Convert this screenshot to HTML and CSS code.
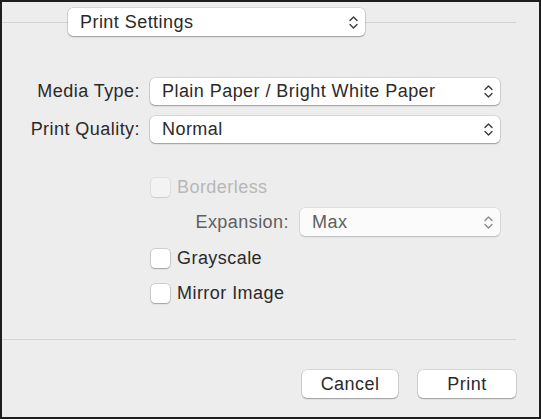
FILE: index.html
```html
<!DOCTYPE html>
<html>
<head>
<meta charset="utf-8">
<link rel="stylesheet" href="styles.css">
</head>
<body>
<div class="dialog">
  <div class="header">
    <div class="popup popup-main">
      <span>Print Settings</span>
      <svg class="chev" width="9" height="15" viewBox="0 0 9 15"><path d="M1 5.5 L4.5 2 L8 5.5 M1 9.5 L4.5 13 L8 9.5" fill="none" stroke="#3a3a3a" stroke-width="1.4" stroke-linecap="round" stroke-linejoin="round"/></svg>
    </div>
  </div>

  <div class="form">
    <div class="label">Media Type:</div>
    <div class="popup popup-field">
      <span>Plain Paper / Bright White Paper</span>
      <svg class="chev" width="9" height="15" viewBox="0 0 9 15"><path d="M1 5.5 L4.5 2 L8 5.5 M1 9.5 L4.5 13 L8 9.5" fill="none" stroke="#3a3a3a" stroke-width="1.4" stroke-linecap="round" stroke-linejoin="round"/></svg>
    </div>
    <div class="label">Print Quality:</div>
    <div class="popup popup-field">
      <span>Normal</span>
      <svg class="chev" width="9" height="15" viewBox="0 0 9 15"><path d="M1 5.5 L4.5 2 L8 5.5 M1 9.5 L4.5 13 L8 9.5" fill="none" stroke="#3a3a3a" stroke-width="1.4" stroke-linecap="round" stroke-linejoin="round"/></svg>
    </div>
  </div>

  <div class="options">
    <div class="check-row disabled row-borderless">
      <span class="box"></span><span>Borderless</span>
    </div>
    <div class="expansion-row">
      <div class="label sub-label">Expansion:</div>
      <div class="popup popup-sub">
        <span>Max</span>
        <svg class="chev" width="9" height="15" viewBox="0 0 9 15"><path d="M1 5.5 L4.5 2 L8 5.5 M1 9.5 L4.5 13 L8 9.5" fill="none" stroke="#8a8a8a" stroke-width="1.4" stroke-linecap="round" stroke-linejoin="round"/></svg>
      </div>
    </div>
    <div class="check-row row-gray">
      <span class="box"></span><span>Grayscale</span>
    </div>
    <div class="check-row row-mirror">
      <span class="box"></span><span>Mirror Image</span>
    </div>
  </div>

  <div class="separator"></div>

  <div class="buttons">
    <div class="btn btn-cancel">Cancel</div>
    <div class="btn btn-print">Print</div>
  </div>
</div>
</body>
</html>
```

FILE: styles.css
```css
html, body {
  margin: 0;
  padding: 0;
}

.dialog {
  width: 541px;
  height: 419px;
  box-sizing: border-box;
  border: 2px solid #1e1e1e;
  background: #ededed;
  font-family: "Liberation Sans", Arial, sans-serif;
  font-size: 18px;
  letter-spacing: 0.45px;
  color: #2a2a2a;
  overflow: hidden;
}

.header {
  height: 34px;
  padding: 6px 0 0 66px;
  box-sizing: border-box;
  background: linear-gradient(#d4d4d4, #d4d4d4) no-repeat 0 20px / 514px 1px;
}

.popup {
  display: flex;
  align-items: center;
  justify-content: space-between;
  box-sizing: border-box;
  background: #ffffff;
  border-radius: 5px;
  box-shadow: 0 0 0 0.5px rgba(0, 0, 0, 0.18), 0 1px 1.5px rgba(0, 0, 0, 0.28);
  padding: 0 7px 0 12px;
  white-space: nowrap;
}

.chev {
  flex: none;
}

.popup-main {
  width: 297px;
  height: 28px;
}

.form {
  margin-top: 42px;
  display: grid;
  grid-template-columns: 138px 350px;
  column-gap: 10px;
  row-gap: 11px;
  align-items: center;
}

.label {
  text-align: right;
  white-space: nowrap;
}

.popup-field {
  height: 27px;
}

.options {
  margin-left: 149px;
  width: 349px;
}

.check-row {
  display: flex;
  align-items: center;
  gap: 7px;
  height: 19px;
}

.box {
  width: 19px;
  height: 19px;
  box-sizing: border-box;
  border-radius: 4px;
  background: #ffffff;
  box-shadow: 0 0 0 0.5px rgba(0, 0, 0, 0.25), 0 1px 1.5px rgba(0, 0, 0, 0.22);
  flex: none;
}

.disabled {
  color: #b7b7b7;
}

.disabled .box {
  background: #f3f3f3;
  box-shadow: 0 0 0 0.5px rgba(0, 0, 0, 0.12), 0 1px 1px rgba(0, 0, 0, 0.08);
}

.row-borderless {
  margin-top: 35px;
}

.expansion-row {
  margin-top: 11px;
  display: grid;
  grid-template-columns: 138px 200px;
  column-gap: 11px;
  align-items: center;
}

.sub-label {
  color: #606060;
}

.popup-sub {
  height: 28px;
  color: #606060;
  background: #fbfbfb;
  box-shadow: 0 0 0 0.5px rgba(0, 0, 0, 0.12), 0 1px 1.5px rgba(0, 0, 0, 0.16);
}

.row-gray {
  margin-top: 13px;
}

.row-mirror {
  margin-top: 16px;
}

.separator {
  margin-top: 36px;
  width: 514px;
  height: 1px;
  background: #d4d4d4;
}

.buttons {
  margin-top: 30px;
  display: flex;
  justify-content: flex-end;
  gap: 20px;
  padding-right: 23px;
}

.btn {
  height: 28px;
  box-sizing: border-box;
  display: flex;
  align-items: center;
  justify-content: center;
  background: #ffffff;
  border-radius: 5px;
  box-shadow: 0 0 0 0.5px rgba(0, 0, 0, 0.18), 0 1px 1.5px rgba(0, 0, 0, 0.28);
}

.btn-cancel {
  width: 96px;
}

.btn-print {
  width: 98px;
}
```
